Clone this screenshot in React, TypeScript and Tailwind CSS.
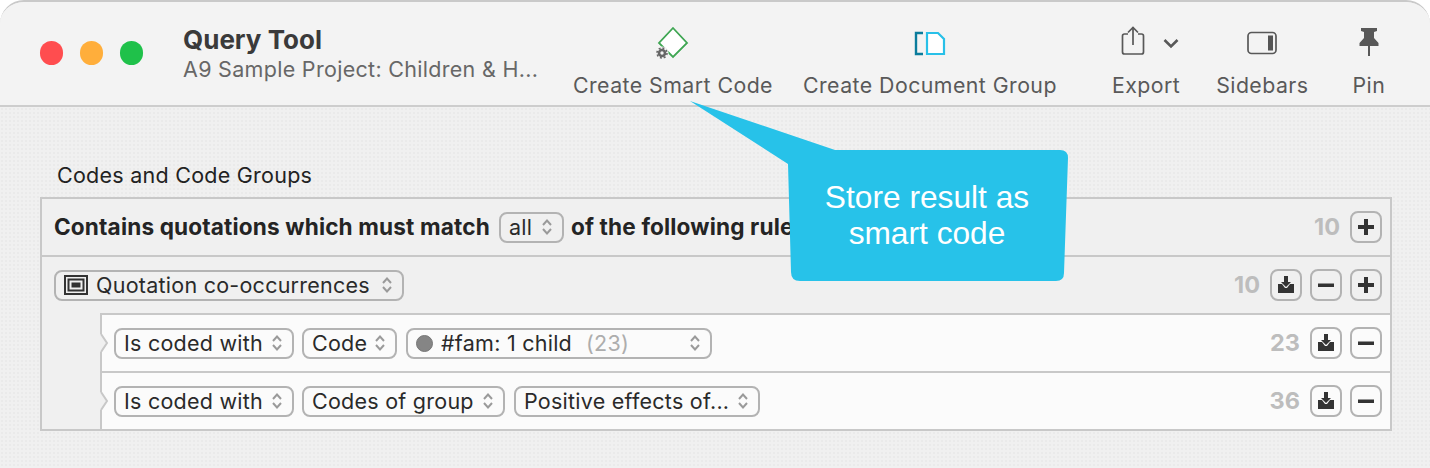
import React from "react";

const Updown = () => (
  <svg width="12" height="18" viewBox="0 0 12 18" fill="none" stroke="#9a9a9a" strokeWidth="2" className="shrink-0">
    <path d="M2 7 L6 2.5 L10 7" />
    <path d="M2 11 L6 15.5 L10 11" />
  </svg>
);

const Popup = ({ w, children }: { w: string; children: React.ReactNode }) => (
  <div className={`${w} h-[31px] shrink-0 flex items-center justify-between rounded-[8px] border-2 border-[#b3b3b3] pl-[8px] pr-[9px] text-[21.5px] font-normal tracking-[0.25px] text-[#2a2a2a]`}>
    <span className="flex items-center gap-[8px] whitespace-nowrap">{children}</span>
    <Updown />
  </div>
);

const IconBtn = ({ kind }: { kind: "plus" | "minus" | "down" }) => (
  <div className="w-[32px] h-[32px] shrink-0 rounded-[8px] border-2 border-[#b3b3b3] flex items-center justify-center">
    <svg width="18" height="18" viewBox="0 0 18 18" fill="#333">
      {kind === "plus" && <path d="M7 1h4v6h6v4h-6v6H7v-6H1V7h6z" />}
      {kind === "minus" && <rect x="1" y="7.5" width="16" height="3.5" />}
      {kind === "down" && <path d="M7 0h4v6h3l-5 5-5-5h3zM1 8h4l3 4h2l3-4h4v9H1z" />}
    </svg>
  </div>
);

const Count = ({ n }: { n: string }) => (
  <span className="text-[23.5px] font-bold text-[#bdbdbd]">{n}</span>
);

const Notch = () => (
  <svg width="9" height="18" viewBox="0 0 9 18" className="absolute left-[-2px] top-[19px]">
    <path d="M0 0 L1 0 L7 9 L1 18 L0 18 Z" fill="#f0f0f0" />
    <path d="M1 0 L7 9 L1 18" fill="none" stroke="#c8c8c8" strokeWidth="2" />
  </svg>
);

const Tool = ({ label, icon, ml }: { label: string; icon: React.ReactNode; ml: string }) => (
  <div className={`${ml} flex flex-col items-center shrink-0`}>
    <div className="h-[34px] flex items-center justify-center">{icon}</div>
    <span className="mt-[11px] text-[21.3px] leading-[28px] tracking-[0.45px] text-[#595959] whitespace-nowrap">{label}</span>
  </div>
);

export default function App() {
  return (
    <div className="relative w-[1430px] h-[468px] overflow-hidden bg-white font-['Inter',sans-serif]">
      <div className="h-full rounded-t-[24px] border-t-2 border-[#c9c9c9] overflow-hidden flex flex-col bg-[#f0f0f0]">
        <header className="h-[105px] shrink-0 bg-[#f3f3f3] border-b-2 border-[#cdcdcd] flex items-start">
          <div className="ml-[40px] mt-[39px] flex gap-[17px]">
            <span className="w-[23px] h-[24px] rounded-full bg-[#ff4d4f]" />
            <span className="w-[23px] h-[24px] rounded-full bg-[#ffae3b]" />
            <span className="w-[23px] h-[24px] rounded-full bg-[#1fc14a]" />
          </div>
          <div className="ml-[40px] mt-[21px] w-[355px] shrink-0">
            <div className="text-[26px] leading-[33px] font-bold text-[#3a3a3a]">Query Tool</div>
            <div className="text-[21.5px] leading-[26px] tracking-[0.3px] text-[#676767] whitespace-nowrap">A9 Sample Project: Children &amp; H...</div>
          </div>
          <div className="flex items-start mt-[24px]">
            <Tool
              ml="ml-[35px]"
              label="Create Smart Code"
              icon={
                <svg width="40" height="34" viewBox="0 0 40 34">
                  <path d="M20 2 L34 17 L20 31 L6 17 Z" fill="#fff" stroke="#3fa653" strokeWidth="1.8" />
                  <circle cx="9" cy="27" r="6.5" fill="#f3f3f3" />
                  <circle cx="9" cy="27" r="3" fill="none" stroke="#666" strokeWidth="2.6" />
                  <circle cx="9" cy="27" r="5" fill="none" stroke="#666" strokeWidth="1.6" strokeDasharray="2 1.9" />
                </svg>
              }
            />
            <Tool
              ml="ml-[30px]"
              label="Create Document Group"
              icon={
                <svg width="32" height="26" viewBox="0 0 32 26" fill="none">
                  <path d="M9 3 H2 V24 H9" stroke="#0a7c9c" strokeWidth="2.4" />
                  <path d="M13 3 H24 L30 9 V24 H13 Z" fill="#fff" stroke="#28c0e8" strokeWidth="2.2" />
                </svg>
              }
            />
            <Tool
              ml="ml-[55px]"
              label="Export"
              icon={
                <svg width="66" height="34" viewBox="0 0 66 34" fill="none" stroke="#585858" strokeWidth="1.7">
                  <path d="M15 8 H11.5 a2 2 0 0 0 -2 2 V26 a2 2 0 0 0 2 2 H28.5 a2 2 0 0 0 2 -2 V10 a2 2 0 0 0 -2 -2 H25" />
                  <path d="M20 19 V2 M15 6.5 L20 1.5 L25 6.5" />
                  <path d="M51.5 14 L58 20.5 L64.5 14" strokeWidth="2.6" />
                </svg>
              }
            />
            <Tool
              ml="ml-[36px]"
              label="Sidebars"
              icon={
                <svg width="30" height="24" viewBox="0 0 30 24" fill="none">
                  <rect x="1" y="1.5" width="28" height="21" rx="3.5" stroke="#585858" strokeWidth="1.7" />
                  <rect x="21" y="4.5" width="5" height="15" fill="#555" />
                </svg>
              }
            />
            <Tool
              ml="ml-[44px]"
              label="Pin"
              icon={
                <svg width="20" height="30" viewBox="0 0 20 30" fill="#585858" className="relative top-[-1px]">
                  <path d="M2 1 H18 V4 L15 5 V11 L19.5 16 V19 H11 V29 H9 V19 H0.5 V16 L5 11 V5 L2 4 Z" />
                </svg>
              }
            />
          </div>
        </header>

        <main className="flex-1 bg-[#f0f0f0] bg-[radial-gradient(#eaeaea_0.8px,transparent_0.8px)] bg-[length:4px_4px] px-[40px] pt-[54px]">
          <div className="pl-[17px] h-[36px] text-[21.5px] leading-[28px] tracking-[0.25px] text-[#222]">Codes and Code Groups</div>
          <div className="w-[1352px] border-2 border-[#c8c8c8] bg-[#f0f0f0]">
            <div className="h-[58px] flex items-center pl-[12px] pr-[8px] border-b-2 border-[#c8c8c8]">
              <span className="text-[22.6px] font-bold text-[#242424] whitespace-nowrap tracking-[0.15px]">Contains quotations which must match</span>
              <div className="ml-[9px]"><Popup w="w-[65px]">all</Popup></div>
              <span className="ml-[7px] text-[22.6px] font-bold text-[#242424] whitespace-nowrap tracking-[0.15px]">of the following rule</span>
              <div className="ml-auto flex items-center gap-[10px]">
                <Count n="10" />
                <IconBtn kind="plus" />
              </div>
            </div>
            <div className="h-[56px] flex items-center pl-[12px] pr-[8px]">
              <Popup w="w-[350px]">
                <svg width="24" height="20" viewBox="0 0 24 20" fill="none" stroke="#333">
                  <rect x="1" y="1" width="22" height="18" strokeWidth="2" />
                  <rect x="4.5" y="4.5" width="15" height="11" strokeWidth="2" />
                  <rect x="8" y="8" width="8" height="4" fill="#333" strokeWidth="1" />
                </svg>
                Quotation co-occurrences
              </Popup>
              <div className="ml-auto flex items-center gap-[8px]">
                <div className="mr-[2px]"><Count n="10" /></div>
                <IconBtn kind="down" />
                <IconBtn kind="minus" />
                <IconBtn kind="plus" />
              </div>
            </div>
            <div className="ml-[58px] bg-[#fbfbfb]">
              <div className="relative h-[58px] flex items-center gap-[8px] pl-[12px] pr-[8px] border-l-2 border-t-2 border-[#c8c8c8]">
                <Notch />
                <Popup w="w-[180px]">Is coded with</Popup>
                <Popup w="w-[95px]">Code</Popup>
                <div className="ml-[1px]">
                  <Popup w="w-[306px]">
                    <span className="w-[17px] h-[17px] rounded-full bg-[#858585] border border-[#777]" />
                    <span>#fam: 1 child</span>
                    <span className="ml-[6px] text-[#adadad]">(23)</span>
                  </Popup>
                </div>
                <div className="ml-auto flex items-center gap-[8px]">
                  <div className="mr-[2px]"><Count n="23" /></div>
                  <IconBtn kind="down" />
                  <IconBtn kind="minus" />
                </div>
              </div>
              <div className="relative h-[58px] flex items-center gap-[8px] pl-[12px] pr-[8px] border-l-2 border-t-2 border-[#c8c8c8]">
                <Notch />
                <Popup w="w-[180px]">Is coded with</Popup>
                <Popup w="w-[203px]">Codes of group</Popup>
                <div className="ml-[1px]">
                  <Popup w="w-[246px]">Positive effects of...</Popup>
                </div>
                <div className="ml-auto flex items-center gap-[8px]">
                  <div className="mr-[2px]"><Count n="36" /></div>
                  <IconBtn kind="down" />
                  <IconBtn kind="minus" />
                </div>
              </div>
            </div>
          </div>
        </main>
      </div>

      <div className="absolute left-[680px] top-[95px] w-[400px] h-[195px]">
        <svg width="400" height="195" viewBox="0 0 400 195" className="absolute inset-0">
          <path
            d="M10 6 L155 55 H380 Q388 55 388 63 L384 178 Q384 186 376 186 H120 Q111 186 111 177 L108 69 Z"
            fill="#27c2e9"
          />
        </svg>
        <div className="absolute left-[107px] top-[84px] w-[280px] text-center font-['Liberation_Sans',sans-serif] text-[31.7px] leading-[36px] text-white">
          Store result as
          <br />
          smart code
        </div>
      </div>
    </div>
  );
}
